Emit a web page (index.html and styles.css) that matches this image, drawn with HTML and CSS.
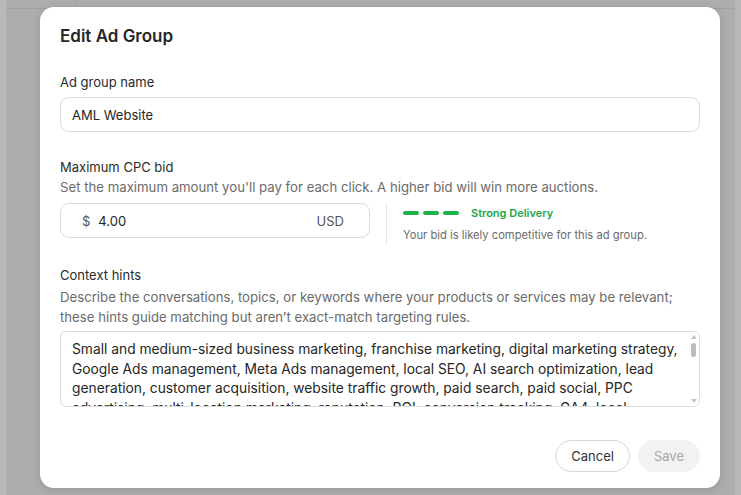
FILE: index.html
```html
<!DOCTYPE html>
<html>
<head>
  <meta charset="utf-8" />
  <title>Edit Ad Group</title>
  <link rel="stylesheet" href="styles.css">
</head>
<body>
  <div class="backdrop">
    <div class="page">
      <div class="page-top"><span class="page-tab"></span></div>
    </div>
  </div>

  <div class="modal">
    <h2 class="modal-title">Edit Ad Group</h2>

    <div class="field field-name">
      <label class="field-label">Ad group name</label>
      <div class="input">AML Website</div>
    </div>

    <div class="field field-bid">
      <label class="field-label">Maximum CPC bid</label>
      <p class="field-help">Set the maximum amount you'll pay for each click. A higher bid will win more auctions.</p>
      <div class="bid-row">
        <div class="input bid-input">
          <span class="bid-currency">$</span>
          <span class="bid-value">4.00</span>
          <span class="bid-unit">USD</span>
        </div>
        <div class="delivery">
          <div class="delivery-head">
            <span class="dash"></span><span class="dash"></span><span class="dash"></span>
            <span class="delivery-label">Strong Delivery</span>
          </div>
          <p class="delivery-note">Your bid is likely competitive for this ad group.</p>
        </div>
      </div>
    </div>

    <div class="field field-hints">
      <label class="field-label">Context hints</label>
      <p class="field-help">Describe the conversations, topics, or keywords where your products or services may be relevant; these hints guide matching but aren’t exact-match targeting rules.</p>
      <div class="textarea">
        <div class="textarea-text">Small and medium-sized business marketing, franchise marketing, digital marketing strategy, Google Ads management, Meta Ads management, local SEO, AI search optimization, lead generation, customer acquisition, website traffic growth, paid search, paid social, PPC advertising, multi-location marketing, reputation, ROI, conversion tracking, GA4, local business</div>
        <div class="scrollbar">
          <span class="arrow arrow-up"></span>
          <span class="thumb"></span>
          <span class="arrow arrow-down"></span>
        </div>
      </div>
    </div>

    <div class="actions">
      <button class="btn btn-cancel">Cancel</button>
      <button class="btn btn-save">Save</button>
    </div>
  </div>
</body>
</html>
```

FILE: styles.css
```css
html, body {
  margin: 0;
  padding: 0;
  width: 100%;
  height: 100%;
  overflow: hidden;
}
body {
  background: #b8b8b8;
  font-family: Inter, "Noto Sans", sans-serif;
  color: #2b2b2b;
}
/* dimmed page behind the dialog */
.backdrop {
  height: 100%;
  padding: 0 6px;
  box-sizing: border-box;
}
.page {
  height: 100%;
  background: #adadad;
}
.page-top {
  height: 8px;
  border-bottom: 1px solid #a2a2a2;
}
.page-tab {
  display: block;
  width: 69px;
  height: 8px;
  border-right: 1px solid #a2a2a2;
}

/* dialog */
.modal {
  position: absolute;
  left: 40px;
  top: 7px;
  width: 680px;
  height: 481px;
  box-sizing: border-box;
  padding: 18px 20px 16px;
  background: #fff;
  border-radius: 14px;
  box-shadow: 0 2px 10px rgba(0, 0, 0, 0.12);
  display: flex;
  flex-direction: column;
}
.modal-title {
  margin: 0;
  font-size: 17px;
  line-height: 22px;
  font-weight: 600;
  color: #262626;
}
.field-label {
  display: block;
  font-size: 13px;
  line-height: 18px;
  color: #2b2b2b;
  margin-bottom: 6px;
}
.field-name {
  margin-top: 26px;
}
.field-bid {
  margin-top: 26px;
}
.field-hints {
  margin-top: 21px;
}
.field-help {
  margin: -5px 0 6px;
  font-size: 13.2px;
  line-height: 20px;
  color: #6b6b6b;
}
.field-hints .field-help {
  margin: -3px 0 4px;
}
.input {
  height: 35px;
  box-sizing: border-box;
  border: 1px solid #dcdcdc;
  border-radius: 9px;
  padding: 0 11px;
  display: flex;
  align-items: center;
  font-size: 13px;
  color: #262626;
}

/* bid row */
.bid-row {
  display: flex;
  align-items: flex-start;
}
.bid-input {
  width: 310px;
  padding: 0 25px 0 21px;
  flex: none;
}
.bid-currency {
  color: #555;
  margin-right: 8px;
}
.bid-unit {
  margin-left: auto;
  color: #555;
}
.delivery {
  margin-left: 16px;
  padding: 3px 0 3px 16px;
  border-left: 1px solid #e2e2e2;
}
.delivery-head {
  display: flex;
  align-items: center;
  height: 14px;
}
.dash {
  width: 16px;
  height: 4px;
  border-radius: 2px;
  background: #1db24f;
  margin-right: 4px;
}
.delivery-label {
  margin-left: 8px;
  font-size: 11px;
  font-weight: 600;
  color: #1aa64a;
}
.delivery-note {
  margin: 8px 0 0;
  font-size: 11.2px;
  line-height: 14px;
  color: #6b6b6b;
}

/* context hints */
.textarea {
  position: relative;
  height: 76px;
  box-sizing: border-box;
  border: 1px solid #dcdcdc;
  border-radius: 6px;
  overflow: hidden;
}
.textarea-text {
  padding: 8px 14px 0 11px;
  font-size: 13.8px;
  line-height: 19.5px;
  color: #262626;
}
.scrollbar {
  position: absolute;
  top: 0;
  right: 0;
  width: 10px;
  height: 100%;
  background: #fff;
}
.thumb {
  position: absolute;
  left: 2px;
  top: 11px;
  width: 5px;
  height: 14px;
  border-radius: 3px;
  background: #bdbdbd;
}
.arrow {
  position: absolute;
  left: 2px;
  width: 0;
  height: 0;
  border-left: 3px solid transparent;
  border-right: 3px solid transparent;
}
.arrow-up {
  top: 3px;
  border-bottom: 4px solid #c4c4c4;
}
.arrow-down {
  bottom: 3px;
  border-top: 4px solid #c4c4c4;
}

/* footer buttons */
.actions {
  margin-top: auto;
  display: flex;
  justify-content: flex-end;
  gap: 8px;
}
.btn {
  height: 32px;
  border-radius: 16px;
  padding: 0 15px;
  font-family: inherit;
  font-size: 13px;
}
.btn-cancel {
  background: #fff;
  border: 1px solid #d9d9d9;
  color: #333;
}
.btn-save {
  background: #f2f2f2;
  border: 1px solid #f2f2f2;
  color: #a8a8a8;
}
```
